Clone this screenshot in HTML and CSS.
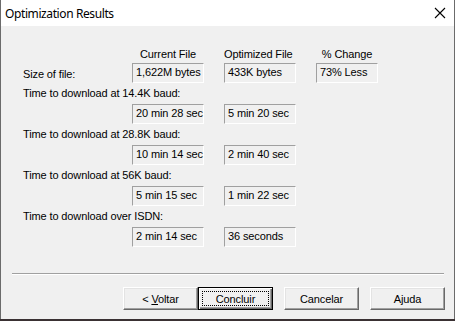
FILE: index.html
```html
<!DOCTYPE html>
<html lang="en">
<head>
    <meta charset="UTF-8">
    <title>Optimization Results</title>
    <link rel="stylesheet" href="styles.css">
</head>
<body>
    <div class="window">
        <div class="titlebar">
            <span class="title">Optimization Results</span>
            <svg class="close" width="12" height="12" viewBox="0 0 12 12">
                <path d="M1 1 L11 11 M11 1 L1 11" stroke="#000" stroke-width="1.1" fill="none"/>
            </svg>
        </div>

        <div class="content">
            <div class="results">
                <div class="row head">
                    <span></span>
                    <span class="center">Current File</span>
                    <span>Optimized File</span>
                    <span class="center">% Change</span>
                </div>
                <div class="row">
                    <span class="label size">Size of file:</span>
                    <span class="field">1,622M bytes</span>
                    <span class="field">433K bytes</span>
                    <span class="field">73% Less</span>
                </div>

                <div class="label line">Time to download at 14.4K baud:</div>
                <div class="row values">
                    <span></span>
                    <span class="field">20 min 28 sec</span>
                    <span class="field">5 min 20 sec</span>
                </div>

                <div class="label line">Time to download at 28.8K baud:</div>
                <div class="row values">
                    <span></span>
                    <span class="field">10 min 14 sec</span>
                    <span class="field">2 min 40 sec</span>
                </div>

                <div class="label line">Time to download at 56K baud:</div>
                <div class="row values">
                    <span></span>
                    <span class="field">5 min 15 sec</span>
                    <span class="field">1 min 22 sec</span>
                </div>

                <div class="label line">Time to download over ISDN:</div>
                <div class="row values">
                    <span></span>
                    <span class="field">2 min 14 sec</span>
                    <span class="field">36 seconds</span>
                </div>
            </div>

            <div class="separator"></div>

            <div class="buttons">
                <button class="btn">&lt; <u>V</u>oltar</button>
                <button class="btn default">Concluir</button>
                <button class="btn spaced">Cancelar</button>
                <button class="btn spaced">Ajuda</button>
            </div>
        </div>
    </div>
</body>
</html>
```

FILE: styles.css
```css
* {
    margin: 0;
    padding: 0;
    box-sizing: border-box;
}

body {
    width: 455px;
    height: 321px;
    background-color: #3a3133;
    font-family: 'Liberation Sans', Arial, sans-serif;
    font-size: 11px;
    letter-spacing: -0.12px;
    color: #000;
    overflow: hidden;
}

.window {
    width: 455px;
    height: 319px;
    background-color: #f0f0f0;
    border-left: 1px solid #6b6b6b;
    border-right: 1px solid #6b6b6b;
    display: flex;
    flex-direction: column;
}

.titlebar {
    height: 26px;
    background-color: #fff;
    display: flex;
    align-items: center;
    justify-content: space-between;
    padding: 0 8px 0 4px;
}

.title {
    font-family: 'Noto Sans', sans-serif;
    font-size: 12px;
    letter-spacing: -0.4px;
    padding-top: 1px;
}

.close {
    display: block;
}

.content {
    flex: 1;
    display: flex;
    flex-direction: column;
}

.results {
    padding: 22px 0 0 22px;
}

.row {
    display: grid;
    grid-template-columns: 89px 72px 72px 62px;
    column-gap: 20px;
    align-items: center;
}

.head {
    line-height: 13px;
    margin-bottom: 2px;
}

.center {
    text-align: center;
}

.label {
    line-height: 13px;
    white-space: nowrap;
}

.label.size {
    padding-top: 2px;
}

.label.line {
    margin-top: 4px;
}

.values {
    margin-top: 4px;
}

.field {
    height: 20px;
    line-height: 17px;
    padding-left: 3px;
    white-space: nowrap;
    border-top: 1px solid #a0a0a0;
    border-left: 1px solid #a0a0a0;
    border-bottom: 1px solid #fff;
    border-right: 1px solid #fff;
}

.separator {
    margin: 26px 10px 0 11px;
    height: 2px;
    border-top: 1px solid #a0a0a0;
    border-bottom: 1px solid #fff;
}

.buttons {
    display: flex;
    justify-content: flex-end;
    padding: 12px 9px 0 0;
}

.btn {
    position: relative;
    width: 75px;
    height: 23px;
    background-color: #f0f0f0;
    font-family: 'Liberation Sans', Arial, sans-serif;
    font-size: 11px;
    letter-spacing: -0.12px;
    color: #000;
    border-top: 1px solid #fff;
    border-left: 1px solid #fff;
    border-bottom: 1px solid #696969;
    border-right: 1px solid #696969;
    box-shadow: inset -1px -1px 0 #a0a0a0, inset 1px 1px 0 #e3e3e3;
}

.btn u {
    text-decoration: underline;
}

.btn.spaced {
    margin-left: 11px;
}

.btn.default {
    border: 1px solid #000;
    box-shadow: inset 1px 1px 0 #fff, inset -1px -1px 0 #696969, inset -2px -2px 0 #a0a0a0;
}

.btn.default::after {
    content: '';
    position: absolute;
    top: 3px;
    left: 3px;
    right: 3px;
    bottom: 3px;
    border: 1px dotted #000;
}
```
